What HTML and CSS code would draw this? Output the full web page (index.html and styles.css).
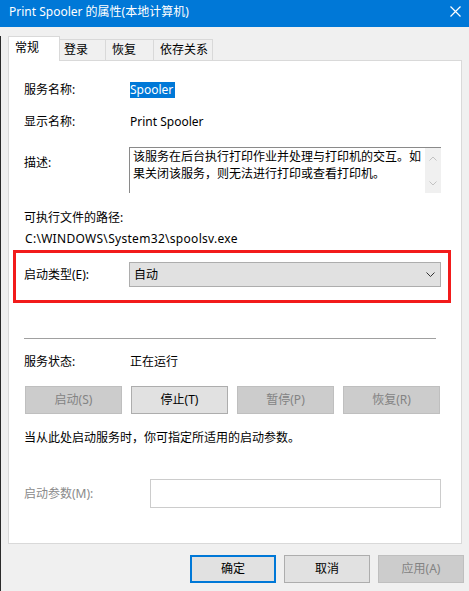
FILE: index.html
```html
<!DOCTYPE html>
<html lang="zh-CN">
<head>
<meta charset="utf-8">
<title>Print Spooler 的属性(本地计算机)</title>
<link rel="stylesheet" href="styles.css">
</head>
<body>
<div class="window">
  <div class="titlebar">
    <span class="title">Print Spooler 的属性(本地计算机)</span>
    <span class="tb-x"><svg width="11" height="11" viewBox="0 0 11 11"><path d="M0.5 0.5L10.5 10.5M10.5 0.5L0.5 10.5" stroke="#ffffff" stroke-width="1.2" fill="none"/></svg></span>
  </div>
  <div class="main">
    <div class="tabs">
      <div class="tab active">常规</div>
      <div class="tab t2">登录</div>
      <div class="tab t3">恢复</div>
      <div class="tab t4">依存关系</div>
    </div>
    <div class="panel">
      <div class="row r1">
        <div class="label">服务名称:</div>
        <div class="value"><span class="selected">Spooler</span></div>
      </div>
      <div class="row r2">
        <div class="label">显示名称:</div>
        <div class="value">Print Spooler</div>
      </div>
      <div class="row r3">
        <div class="label desc-label">描述:</div>
        <div class="desc">
          <div class="desc-text">该服务在后台执行打印作业并处理与打印机的交互。如果关闭该服务，则无法进行打印或查看打印机。</div>
          <div class="scrollbar">
            <svg width="8" height="5" viewBox="0 0 8 5"><path d="M0.5 4.5L4 1L7.5 4.5" stroke="#c2c2c2" stroke-width="1" fill="none"/></svg>
            <svg width="8" height="5" viewBox="0 0 8 5"><path d="M0.5 0.5L4 4L7.5 0.5" stroke="#c2c2c2" stroke-width="1" fill="none"/></svg>
          </div>
        </div>
      </div>
      <div class="line r4">可执行文件的路径:</div>
      <div class="line r5">C:\WINDOWS\System32\spoolsv.exe</div>
      <div class="redbox">
        <div class="label">启动类型(E):</div>
        <div class="combo">
          <span>自动</span>
          <svg width="9" height="5" viewBox="0 0 9 5"><path d="M0.5 0.5L4.5 4.5L8.5 0.5" stroke="#333" stroke-width="1" fill="none"/></svg>
        </div>
      </div>
      <div class="separator"></div>
      <div class="row r6">
        <div class="label">服务状态:</div>
        <div class="value">正在运行</div>
      </div>
      <div class="buttons">
        <div class="btn disabled">启动(S)</div>
        <div class="btn">停止(T)</div>
        <div class="btn disabled">暂停(P)</div>
        <div class="btn disabled">恢复(R)</div>
      </div>
      <div class="line hint">当从此处启动服务时，你可指定所适用的启动参数。</div>
      <div class="params">
        <div class="label grey">启动参数(M):</div>
        <div class="input"></div>
      </div>
    </div>
    <div class="footer">
      <div class="btn fbtn default">确定</div>
      <div class="btn fbtn">取消</div>
      <div class="btn fbtn disabled">应用(A)</div>
    </div>
  </div>
</div>
</body>
</html>
```

FILE: styles.css
```css
* { box-sizing: border-box; }
html, body { margin: 0; padding: 0; background: #f0f0f0; }
body {
  font-family: "Noto Sans", "Noto Sans CJK SC", sans-serif;
  font-size: 12px;
  line-height: 16px;
  color: #000;
}
.window {
  width: 469px;
  height: 591px;
  background: #f0f0f0;
  overflow: hidden;
}
.titlebar {
  height: 27px;
  background: #0078d7;
  color: #fff;
  display: flex;
  align-items: flex-start;
  padding: 4px 8px 0 9px;
}
.title { line-height: 16px; }
.tb-x {
  display: flex;
  flex: none;
  width: 11px;
  height: 11px;
  margin: 2px 0 0 auto;
}
.tb-x svg { display: block; }
.main {
  height: 564px;
  border-left: 1px solid #2b2b2b;
}
.tabs {
  display: flex;
  align-items: flex-end;
  height: 24px;
  margin: 9px 0 0 7px;
}
.tab {
  height: 21px;
  border-top: 1px solid #d9d9d9;
  border-right: 1px solid #d9d9d9;
  background: #f0f0f0;
  line-height: 20px;
}
.tab.active {
  position: relative;
  z-index: 1;
  height: 25px;
  margin-bottom: -1px;
  width: 52px;
  border: 1px solid #d9d9d9;
  border-bottom: none;
  background: #fff;
  padding-left: 6px;
  line-height: 22px;
}
.t2 { width: 46px; padding-left: 4px; }
.t3 { width: 48px; padding-left: 6px; }
.t4 { width: 59px; padding-left: 6px; }
.panel {
  margin-left: 7px;
  width: 454px;
  height: 484px;
  background: #fff;
  border: 1px solid #d9d9d9;
  padding: 0 20px 0 15px;
}
.row { display: flex; }
.label { width: 106px; flex: none; }
.r1 { margin-top: 21px; }
.r2 { margin-top: 16px; }
.r3 { margin-top: 17px; }
.selected {
  display: inline-block;
  background: #0078d7;
  color: #fff;
  padding-right: 2px;
}
.desc-label { width: 105px; padding-top: 8px; }
.desc {
  display: flex;
  width: 312px;
  height: 46px;
  border-top: 1px solid #8a8a8a;
  border-left: 1px solid #8a8a8a;
}
.desc-text {
  flex: 1;
  padding: 0 0 0 3px;
  line-height: 17px;
}
.scrollbar {
  width: 16px;
  flex: none;
  background: #f0f0f0;
  display: flex;
  flex-direction: column;
  justify-content: space-between;
  align-items: center;
  padding: 8px 0 7px;
}
.scrollbar svg { display: block; }
.r4 { margin-top: 17px; }
.r5 { margin-top: 5px; padding-left: 1px; letter-spacing: 0.3px; }
.redbox {
  display: flex;
  align-items: center;
  margin: 3px -10px 0 -11px;
  height: 53px;
  border: 3px solid #f21b1b;
  padding: 9px 7px 13px 8px;
}
.redbox .label { width: 105px; }
.combo {
  flex: 1;
  height: 25px;
  background: #e1e1e1;
  border: 1px solid #adadad;
  display: flex;
  align-items: center;
  justify-content: space-between;
  padding: 0 5px 0 4px;
}
.combo svg { display: block; }
.separator {
  margin: 35px 5px 0 0;
  height: 1px;
  background: #a0a0a0;
}
.r6 { margin-top: 15px; }
.buttons {
  margin-top: 16px;
  padding-left: 1px;
  display: grid;
  grid-template-columns: repeat(4, 97px);
  column-gap: 9px;
}
.btn {
  height: 28px;
  background: #e1e1e1;
  border: 1px solid #adadad;
  display: flex;
  align-items: center;
  justify-content: center;
}
.btn.disabled {
  background: #cccccc;
  border-color: #bfbfbf;
  color: #838383;
}
.hint { margin-top: 16px; }
.params {
  margin-top: 33px;
  display: flex;
  align-items: center;
}
.params .label { width: 126px; }
.grey { color: #8a8a8a; }
.input {
  flex: 1;
  height: 29px;
  border: 1px solid #cccccc;
  background: #fff;
}
.footer {
  margin-top: 11px;
  display: flex;
  justify-content: flex-end;
  gap: 8px;
  padding-right: 5px;
}
.fbtn { width: 86px; }
.btn.default { border: 2px solid #0078d7; }
```
